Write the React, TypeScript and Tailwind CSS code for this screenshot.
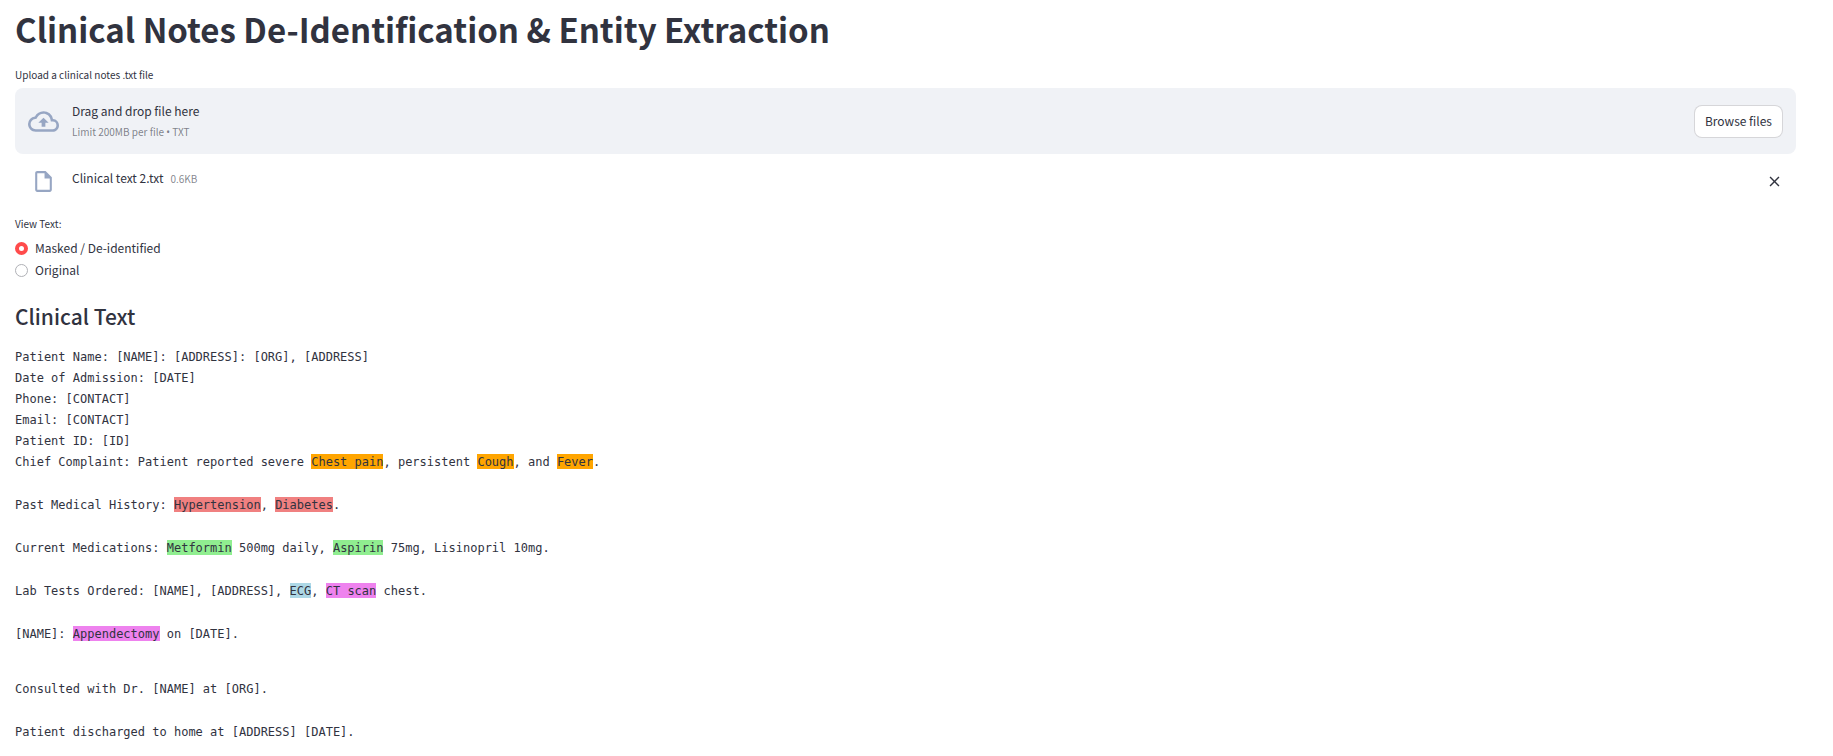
import { useState } from "react";
import type { ReactNode } from "react";
import { MdClose, MdOutlineCloudUpload, MdOutlineInsertDriveFile } from "react-icons/md";

const TONES = {
  symptom: "bg-[#ffa500]",
  disease: "bg-[#f08080]",
  drug: "bg-[#90ee90]",
  test: "bg-[#add8e6]",
  procedure: "bg-[#ee82ee]",
};

function Entity({ tone, children }: { tone: keyof typeof TONES; children: ReactNode }) {
  return <mark className={`pt-px text-inherit ${TONES[tone]}`}>{children}</mark>;
}

const VIEWS = ["Masked / De-identified", "Original"];

export default function App() {
  const [view, setView] = useState(VIEWS[0]);

  return (
    <main className="bg-white pt-1.5 pr-[37px] pb-3 pl-[15px] font-['Noto_Sans_CJK_SC',sans-serif] text-xs text-[#31333f]">
      <h1 className="text-[33px] leading-[46px] font-bold">
        Clinical Notes De-Identification &amp; Entity Extraction
      </h1>

      <section className="mt-3.5">
        <label htmlFor="notes-file" className="block text-[10px] leading-[18px]">
          Upload a clinical notes .txt file
        </label>
        <input id="notes-file" type="file" accept=".txt" className="hidden" />
        <div className="mt-1 flex h-[66px] items-center rounded-lg bg-[#f0f2f6] px-[13px]">
          <MdOutlineCloudUpload className="size-[31px] text-[#97a6c3]" />
          <div className="ml-[13px] flex-1 pt-0.5">
            <p className="leading-5">Drag and drop file here</p>
            <p className="text-[10px] leading-[21px] text-[#31333f]/60">
              Limit 200MB per file <span className="font-['Noto_Sans',sans-serif]">•</span> TXT
            </p>
          </div>
          <button
            type="button"
            className="h-[33px] rounded-lg border border-[#31333f]/20 bg-white px-[10px] leading-5"
          >
            Browse files
          </button>
        </div>
        <div className="mt-3 flex h-[30px] items-center px-[13px]">
          <MdOutlineInsertDriveFile className="mx-[3px] size-[25px] text-[#97a6c3]" />
          <p className="ml-[13px] flex-1 pb-1.5 leading-5">
            Clinical text 2.txt
            <span className="ml-[7px] text-[10px] text-[#31333f]/60">0.6KB</span>
          </p>
          <button type="button" aria-label="Remove file">
            <MdClose className="size-[17px]" />
          </button>
        </div>
      </section>

      <fieldset className="mt-[18px]">
        <legend className="text-[10px] leading-5">View Text:</legend>
        <div className="mt-[3px] flex flex-col items-start">
          {VIEWS.map((name) => (
            <label key={name} className="flex items-center gap-[7px] leading-[22px]">
              <input
                type="radio"
                name="view"
                checked={view === name}
                onChange={() => setView(name)}
                className="size-[13px] appearance-none rounded-full border border-[#b0b1b6] bg-white checked:border-4 checked:border-[#ff4b4b]"
              />
              {name}
            </label>
          ))}
        </div>
      </fieldset>

      <h2 className="mt-[19px] text-[21px] leading-8 font-medium">Clinical Text</h2>

      <div className="mt-[15px] flex flex-col gap-[22px] font-['DejaVu_Sans_Mono',monospace] text-xs leading-[21px]">
        <p>
          Patient Name: [NAME]: [ADDRESS]: [ORG], [ADDRESS]
          <br />
          Date of Admission: [DATE]
          <br />
          Phone: [CONTACT]
          <br />
          Email: [CONTACT]
          <br />
          Patient ID: [ID]
          <br />
          Chief Complaint: Patient reported severe <Entity tone="symptom">Chest pain</Entity>, persistent{" "}
          <Entity tone="symptom">Cough</Entity>, and <Entity tone="symptom">Fever</Entity>.
        </p>
        <p>
          Past Medical History: <Entity tone="disease">Hypertension</Entity>,{" "}
          <Entity tone="disease">Diabetes</Entity>.
        </p>
        <p>
          Current Medications: <Entity tone="drug">Metformin</Entity> 500mg daily,{" "}
          <Entity tone="drug">Aspirin</Entity> 75mg, Lisinopril 10mg.
        </p>
        <p>
          Lab Tests Ordered: [NAME], [ADDRESS], <Entity tone="test">ECG</Entity>,{" "}
          <Entity tone="procedure">CT scan</Entity> chest.
        </p>
        <p>
          [NAME]: <Entity tone="procedure">Appendectomy</Entity> on [DATE].
        </p>
        <p className="mt-3">Consulted with Dr. [NAME] at [ORG].</p>
        <p>Patient discharged to home at [ADDRESS] [DATE].</p>
      </div>
    </main>
  );
}
